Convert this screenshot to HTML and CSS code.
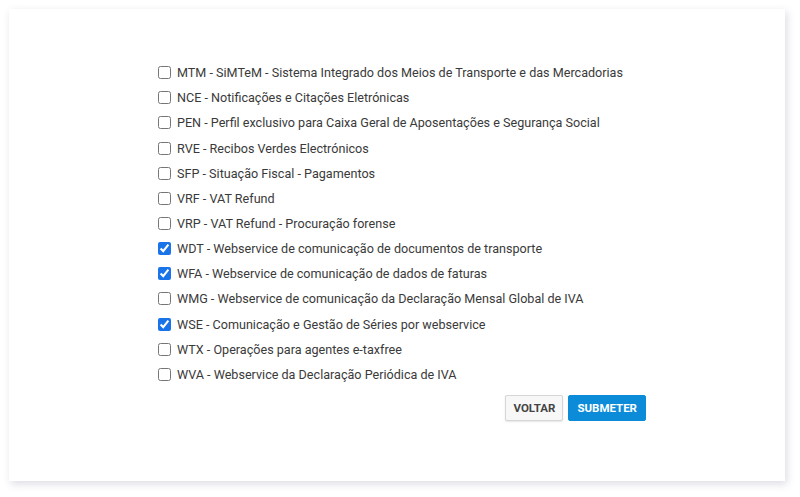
FILE: index.html
```html
<!DOCTYPE html>
<html lang="pt">
<head>
    <meta charset="UTF-8">
    <title>Serviços</title>
    <link rel="stylesheet" href="styles.css">
</head>
<body>

<div class="card">
    <form class="services">
        <label class="row"><input type="checkbox"> MTM - SiMTeM - Sistema Integrado dos Meios de Transporte e das Mercadorias</label>
        <label class="row"><input type="checkbox"> NCE - Notificações e Citações Eletrónicas</label>
        <label class="row"><input type="checkbox"> PEN - Perfil exclusivo para Caixa Geral de Aposentações e Segurança Social</label>
        <label class="row"><input type="checkbox"> RVE - Recibos Verdes Electrónicos</label>
        <label class="row"><input type="checkbox"> SFP - Situação Fiscal - Pagamentos</label>
        <label class="row"><input type="checkbox"> VRF - VAT Refund</label>
        <label class="row"><input type="checkbox"> VRP - VAT Refund - Procuração forense</label>
        <label class="row"><input type="checkbox" checked> WDT - Webservice de comunicação de documentos de transporte</label>
        <label class="row"><input type="checkbox" checked> WFA - Webservice de comunicação de dados de faturas</label>
        <label class="row"><input type="checkbox"> WMG - Webservice de comunicação da Declaração Mensal Global de IVA</label>
        <label class="row"><input type="checkbox" checked> WSE - Comunicação e Gestão de Séries por webservice</label>
        <label class="row"><input type="checkbox"> WTX - Operações para agentes e-taxfree</label>
        <label class="row"><input type="checkbox"> WVA - Webservice da Declaração Periódica de IVA</label>

        <div class="actions">
            <button type="button" class="btn btn-back">VOLTAR</button>
            <button type="button" class="btn btn-submit">SUBMETER</button>
        </div>
    </form>
</div>

</body>
</html>
```

FILE: styles.css
```css
body {
    margin: 0;
    padding: 9px 15px 16px 9px;
    background: #fff;
    font-family: Roboto, "Liberation Sans", sans-serif;
    color: #3a3a3a;
}

.card {
    height: 472px;
    box-sizing: border-box;
    padding: 51px 0 0 149px;
    background: #fff;
    box-shadow: 2px 3px 8px rgba(60, 60, 110, 0.18);
}

.services {
    width: 488px;
}

.row {
    display: flex;
    align-items: center;
    height: 25.17px;
    font-size: 12.6px;
    cursor: pointer;
}

.row input {
    width: 13px;
    height: 13px;
    margin: 0 6px 0 0;
    accent-color: #1a73e8;
}

.actions {
    display: flex;
    justify-content: flex-end;
    gap: 5px;
    margin-top: 8px;
}

.btn {
    height: 26px;
    padding: 0 7px;
    font-family: Roboto, "Liberation Sans", sans-serif;
    font-size: 11.5px;
    font-weight: bold;
    border-radius: 2px;
    cursor: pointer;
}

.btn-back {
    background: #f7f7f7;
    color: #444;
    border: 1px solid #d6d6d6;
    box-shadow: 0 1px 2px rgba(0, 0, 0, 0.1);
}

.btn-submit {
    background: #0b8bd8;
    color: #fff;
    border: 1px solid #0b8bd8;
    padding: 0 8px;
}
```
